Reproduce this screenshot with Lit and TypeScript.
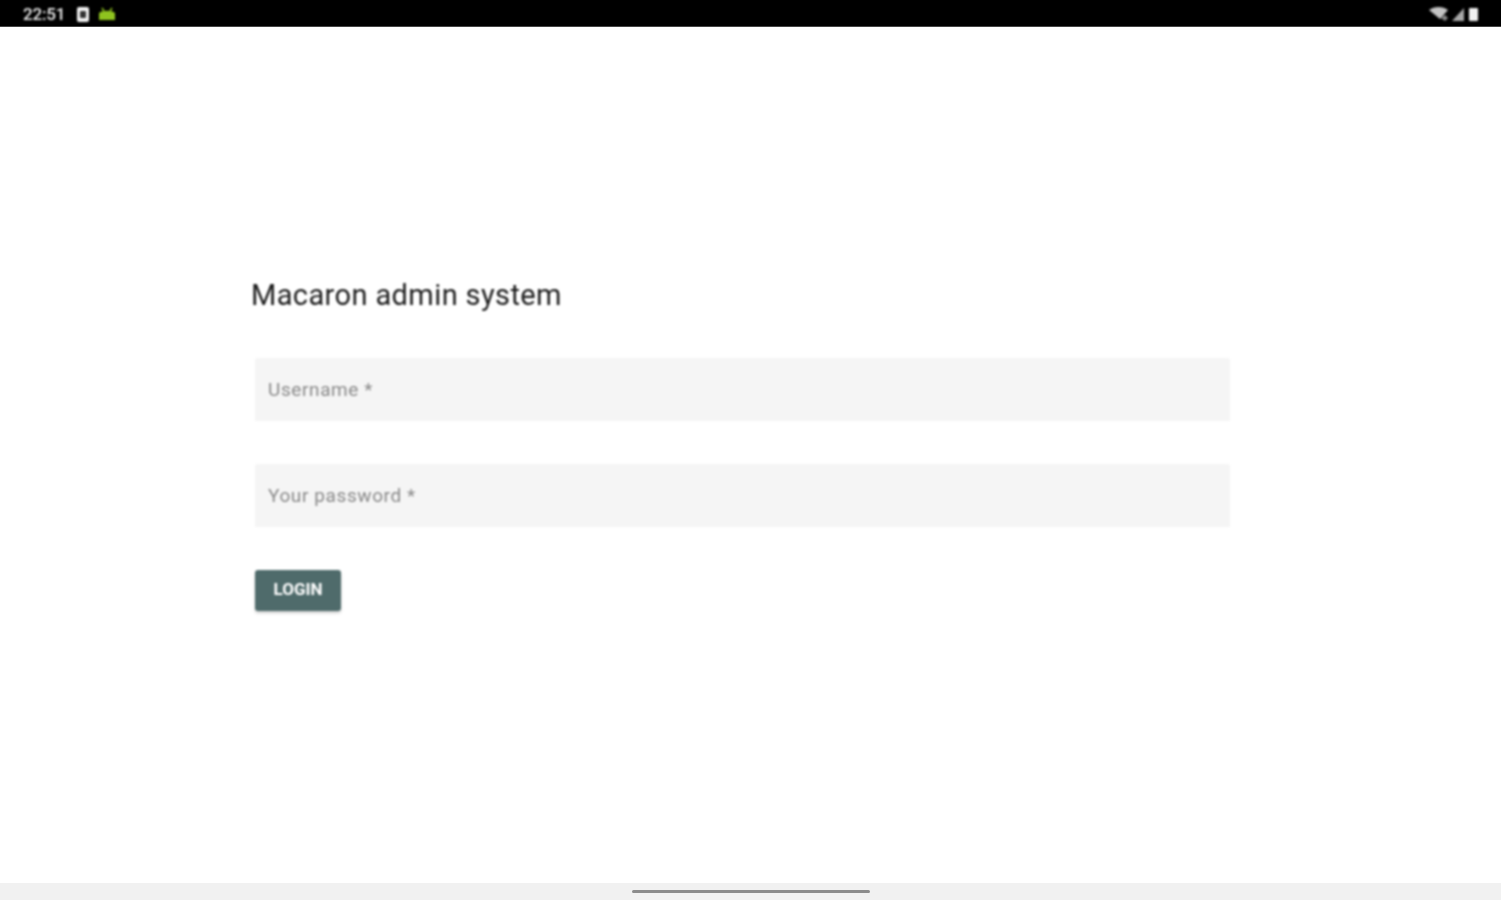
import { LitElement, html, css } from "lit";
import { customElement } from "lit/decorators.js";

@customElement("app-root")
export class AppRoot extends LitElement {
  static styles = css`
    :host {
      display: flex;
      flex-direction: column;
      height: 900px;
      background: #fff;
      font-family: Roboto, "Liberation Sans", sans-serif;
      overflow: hidden;
    }
    .status {
      height: 27px;
      flex: none;
      background: #000;
      display: flex;
      align-items: center;
      justify-content: space-between;
      padding: 2px 23px 0 23px;
      box-sizing: border-box;
      border-bottom: 1px solid #444;
    }
    .status-left, .status-right { display: flex; align-items: center; filter: blur(0.8px); }
    .time { color: #f0f0f0; font-size: 17px; font-weight: 500; width: 54px; letter-spacing: -0.2px; }
    .status svg { display: block; }
    .android { margin-left: 9px; }
    .signal { margin-left: 3px; }
    .battery { margin-left: 5px; }
    main {
      flex: 1;
      display: flex;
      flex-direction: column;
      align-items: flex-start;
      padding: 251px 0 0 255px;
      filter: blur(0.8px);
    }
    h1 {
      margin: 0 0 45px -4px;
      height: 35px;
      line-height: 35px;
      font-size: 29px;
      font-weight: 400;
      color: #1c1c1c;
      letter-spacing: 0.39px;
    }
    .field {
      width: 975px;
      height: 63px;
      box-sizing: border-box;
      margin-bottom: 43px;
      padding: 0 13px;
      display: flex;
      align-items: center;
      background: #f5f5f5;
      border-radius: 3px 3px 0 0;
      color: #888;
      font-size: 19px;
      letter-spacing: 0.6px;
    }
    button {
      width: 86px;
      height: 41px;
      border: none;
      border-radius: 3px;
      background: #4f6b6b;
      color: #fff;
      font: 700 17px Roboto, "Liberation Sans", sans-serif;
      box-shadow: 0 2px 3px rgba(0, 0, 0, 0.2);
      padding: 0 0 3px;
    }
    .nav {
      height: 17px;
      flex: none;
      background: #f1f1f1;
      display: flex;
      justify-content: center;
      padding-top: 7px;
      box-sizing: border-box;
    }
    .pill { width: 238px; height: 3px; border-radius: 2px; background: #8c8c8c; filter: blur(0.6px); }
  `;

  render() {
    return html`
      <div class="status">
        <div class="status-left">
          <span class="time">22:51</span>
          <svg width="12" height="15" viewBox="0 0 12 15">
            <rect width="12" height="15" rx="2" fill="#f2f2f2" />
            <rect x="3" y="4" width="6" height="7" rx="1" fill="#333" />
          </svg>
          <svg class="android" width="18" height="15" viewBox="0 0 18 15">
            <path d="M4 1l2 3M14 1l-2 3" stroke="#8fc31f" stroke-width="1.5" />
            <path d="M1 6c3-3 13-3 16 0v7H1z" fill="#8fc31f" />
          </svg>
        </div>
        <div class="status-right">
          <svg width="20" height="14" viewBox="0 0 20 14">
            <path d="M0 3c5-4 14-4 19 0l-8 9z" fill="#c4c4c4" />
            <path d="M12 11l4-3 3 3-3 3z" fill="#8a8a8a" />
          </svg>
          <svg class="signal" width="12" height="13" viewBox="0 0 12 13">
            <path d="M0 13L12 0v13z" fill="#a8a8a8" />
          </svg>
          <svg class="battery" width="9" height="13" viewBox="0 0 9 13">
            <rect width="9" height="13" rx="1" fill="#f0f0f0" />
          </svg>
        </div>
      </div>
      <main>
        <h1>Macaron admin system</h1>
        <div class="field">Username *</div>
        <div class="field">Your password *</div>
        <button>LOGIN</button>
      </main>
      <div class="nav"><div class="pill"></div></div>
    `;
  }
}
